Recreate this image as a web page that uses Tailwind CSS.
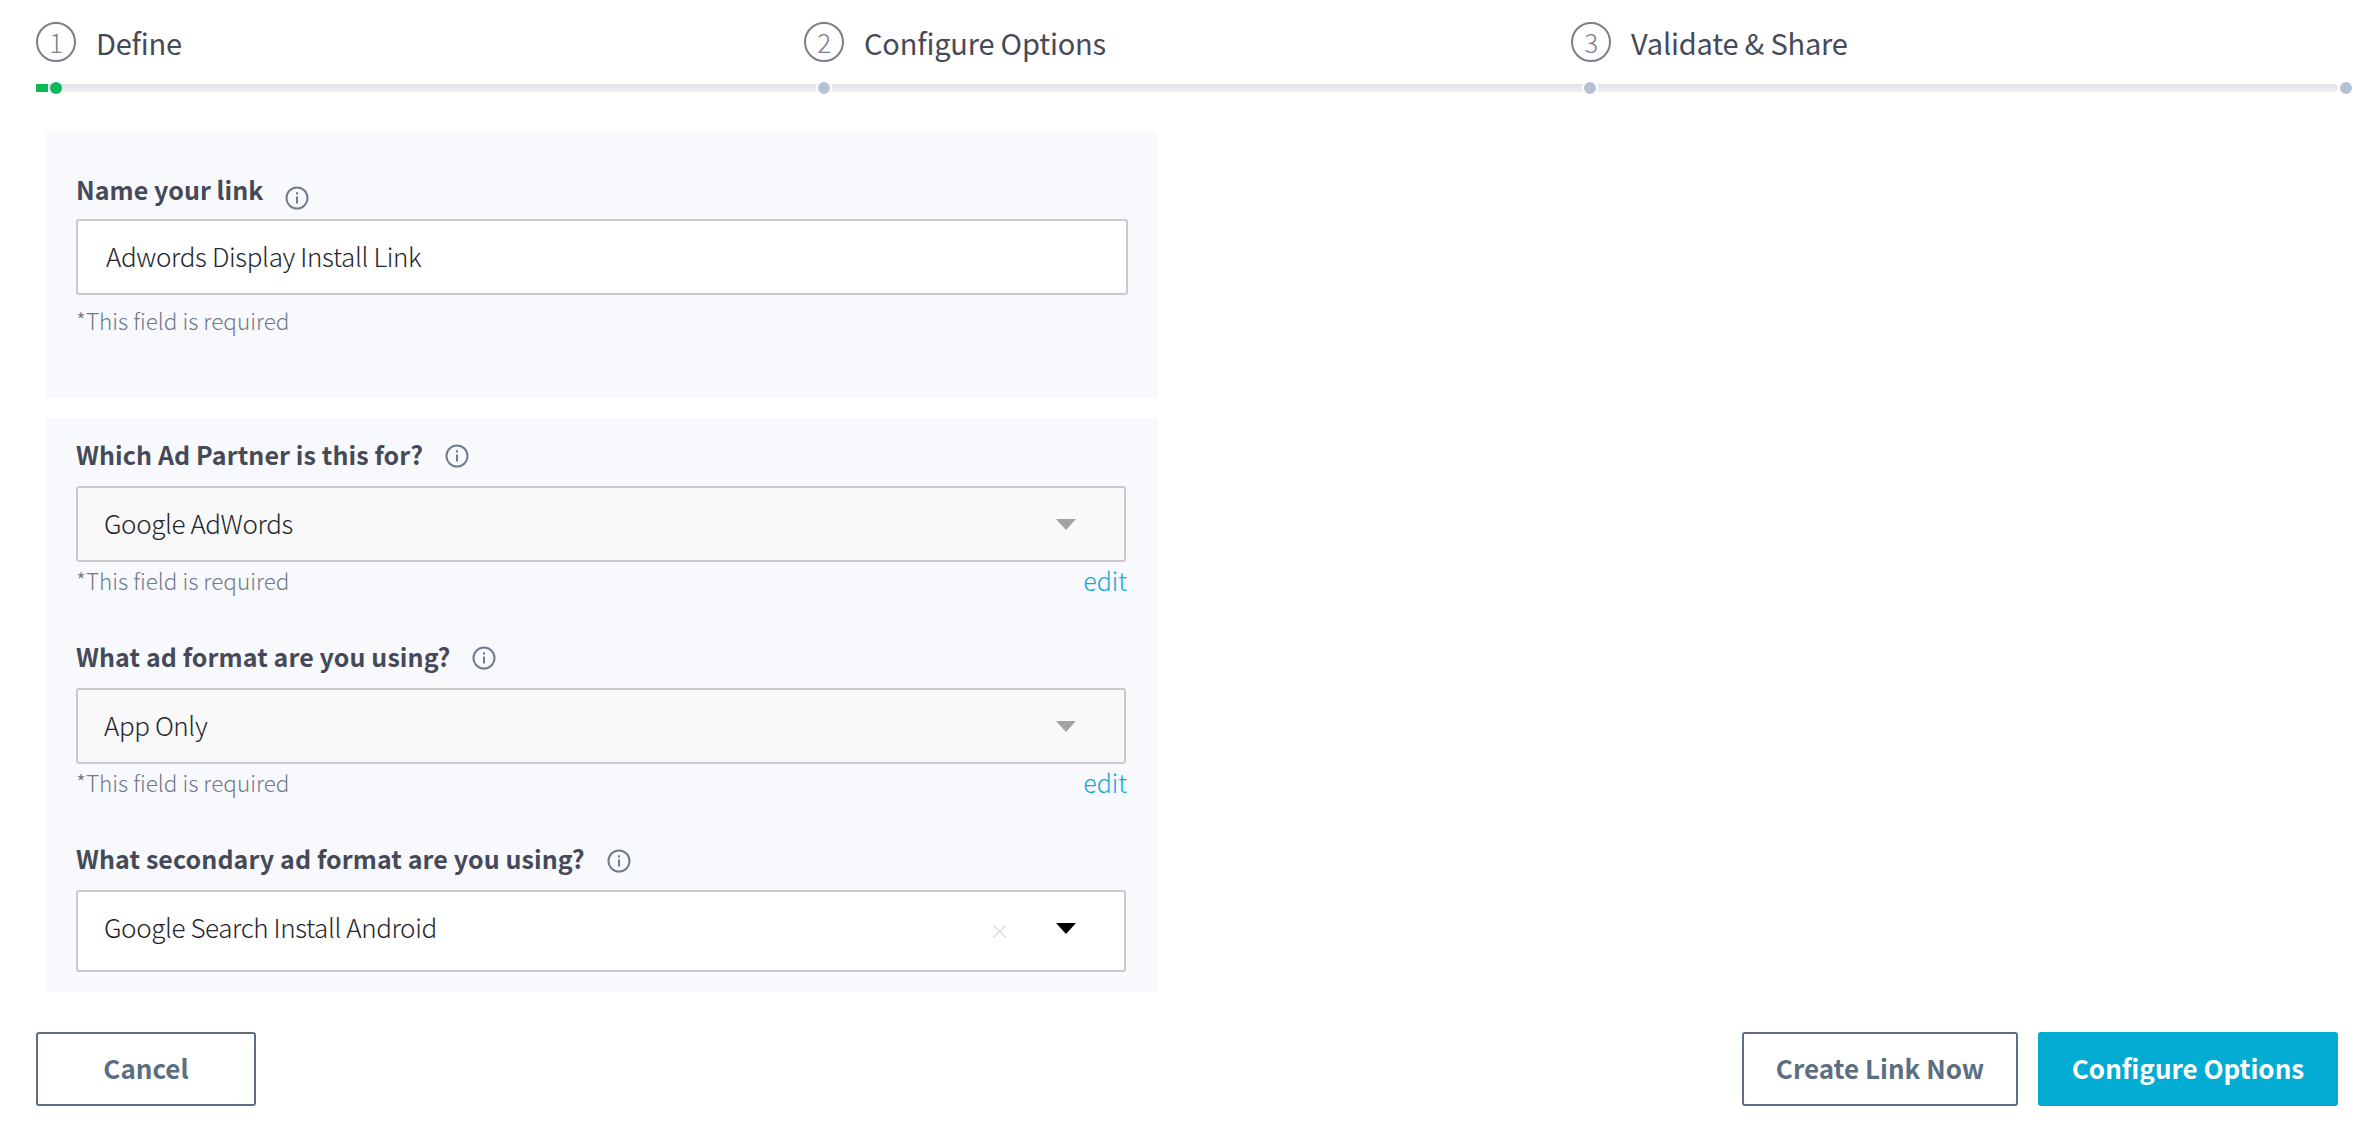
<!DOCTYPE html>
<html>
<head>
<meta charset="utf-8">
<script src="https://cdn.jsdelivr.net/npm/@tailwindcss/browser@4"></script>
</head>
<body class="bg-white font-['Noto_Sans_CJK_SC','Source_Sans_Pro',sans-serif] text-[#464a58] overflow-hidden">
<div class="w-[2366px] h-[1142px] flex flex-col pl-[36px] pr-[28px] pt-[22px]">
  <div class="flex h-[40px] text-[29px] tracking-[-0.2px] leading-[40px]">
    <div class="w-[768px] flex items-center gap-[20px]"><span class="w-[40px] h-[40px] rounded-full border-2 border-[#7b7e8c] flex items-center justify-center text-[26px] font-light text-[#7b7e8c]">1</span><span class="pb-[1px]">Define</span></div>
    <div class="w-[767px] flex items-center gap-[20px]"><span class="w-[40px] h-[40px] rounded-full border-2 border-[#7b7e8c] flex items-center justify-center text-[26px] font-light text-[#7b7e8c]">2</span><span class="pb-[1px]">Configure Options</span></div>
    <div class="flex items-center gap-[20px]"><span class="w-[40px] h-[40px] rounded-full border-2 border-[#7b7e8c] flex items-center justify-center text-[26px] font-light text-[#7b7e8c]">3</span><span class="pb-[1px]">Validate &amp; Share</span></div>
  </div>
  <div class="relative h-[8px] mt-[22px] w-[2302px] rounded-r-[4px] bg-linear-to-b from-[#e2e4ea] to-[#f0f1f4]">
    <div class="absolute left-0 top-0 w-[12px] h-[8px] bg-[#0fb85a]"></div>
    <div class="absolute left-[14px] top-[-2px] w-[12px] h-[12px] rounded-full bg-[#0fb85a]"></div>
    <div class="absolute left-[782px] top-[-2px] w-[12px] h-[12px] rounded-full bg-[#b4c3d4] border-2 border-white box-content -translate-x-[2px] -translate-y-[2px]"></div>
    <div class="absolute left-[1548px] top-[-2px] w-[12px] h-[12px] rounded-full bg-[#b4c3d4] border-2 border-white box-content -translate-x-[2px] -translate-y-[2px]"></div>
    <div class="absolute left-[2304px] top-[-2px] w-[12px] h-[12px] rounded-full bg-[#b4c3d4] border-2 border-white box-content -translate-x-[2px] -translate-y-[2px]"></div>
  </div>
  <div class="ml-[10px] mt-[40px] w-[1112px] flex flex-col">
    <section class="h-[266px] bg-[#f8f9fd] px-[30px] pt-[40px]">
      <div class="flex items-center h-[47px] pb-[14px] text-[25px] tracking-[0.05px] font-bold leading-[36px]"><span>Name your link</span><svg class="ml-[22px] mt-[18px]" width="24" height="24" viewBox="0 0 24 24" fill="none" stroke="#6f7d8e" stroke-width="2"><circle cx="12" cy="12" r="10.5"/><path d="M12 10.5v7"/><path d="M12 6.2v2.4"/></svg></div>
      <div class="h-[76px] w-[1052px] bg-white border-2 border-[#cacaca] rounded-[3px] flex items-center pl-[28px] pb-[4px] text-[26px] font-light tracking-[-0.35px] text-[#23262f]">Adwords Display Install Link</div>
      <div class="mt-[8px] text-[22.5px] leading-[34px] font-light text-[#717a88]">*This field is required</div>
    </section>
    <section class="mt-[20px] h-[574px] bg-[#f8f9fd] px-[30px] pt-[20px]">
      <div class="flex items-center h-[48px] pb-[15px] text-[25px] tracking-[0.1px] font-bold"><span>Which Ad Partner is this for?</span><svg class="ml-[22px] mt-[3px]" width="24" height="24" viewBox="0 0 24 24" fill="none" stroke="#6f7d8e" stroke-width="2"><circle cx="12" cy="12" r="10.5"/><path d="M12 10.5v7"/><path d="M12 6.2v2.4"/></svg></div>
      <div class="h-[76px] w-[1050px] bg-[#f9f9f9] border-2 border-[#cacaca] rounded-[3px] flex items-center justify-between pl-[26px] pr-[48px] text-[26px] font-light tracking-[-0.4px] text-[#23262f]"><span class="pb-[4px]">Google AdWords</span><span class="w-0 h-0 border-x-[10px] border-x-transparent border-t-[11px] border-t-[#a3a3a3]"></span></div>
      <div class="flex justify-between w-[1051px] h-[34px] leading-[34px] mt-[1px] text-[22.5px] font-light text-[#717a88]"><span>*This field is required</span><a class="text-[25px] text-[#0fa9d1]">edit</a></div>
      <div class="flex items-center h-[48px] pb-[15px] mt-[43px] text-[25px] tracking-[0.1px] font-bold"><span>What ad format are you using?</span><svg class="ml-[22px] mt-[3px]" width="24" height="24" viewBox="0 0 24 24" fill="none" stroke="#6f7d8e" stroke-width="2"><circle cx="12" cy="12" r="10.5"/><path d="M12 10.5v7"/><path d="M12 6.2v2.4"/></svg></div>
      <div class="h-[76px] w-[1050px] bg-[#f9f9f9] border-2 border-[#cacaca] rounded-[3px] flex items-center justify-between pl-[26px] pr-[48px] text-[26px] font-light tracking-[-0.4px] text-[#23262f]"><span class="pb-[4px]">App Only</span><span class="w-0 h-0 border-x-[10px] border-x-transparent border-t-[11px] border-t-[#a3a3a3]"></span></div>
      <div class="flex justify-between w-[1051px] h-[34px] leading-[34px] mt-[1px] text-[22.5px] font-light text-[#717a88]"><span>*This field is required</span><a class="text-[25px] text-[#0fa9d1]">edit</a></div>
      <div class="flex items-center h-[48px] pb-[14px] mt-[43px] text-[25px] tracking-[0.1px] font-bold"><span>What secondary ad format are you using?</span><svg class="ml-[22px] mt-[3px]" width="24" height="24" viewBox="0 0 24 24" fill="none" stroke="#6f7d8e" stroke-width="2"><circle cx="12" cy="12" r="10.5"/><path d="M12 10.5v7"/><path d="M12 6.2v2.4"/></svg></div>
      <div class="h-[82px] w-[1050px] bg-white border-2 border-[#cacaca] rounded-[3px] flex items-center pl-[26px] pr-[48px] pb-[6px] text-[26px] font-light tracking-[-0.4px] text-[#23262f]"><span class="pb-[3px]">Google Search Install Android</span><span class="ml-auto mr-[47px] mt-[6px] text-[20px] text-[#cfd2d6] font-light">×</span><span class="w-0 h-0 border-x-[10px] border-x-transparent border-t-[11px] border-t-black"></span></div>
    </section>
  </div>
  <div class="mt-[40px] flex text-[26px] font-bold">
    <button class="w-[220px] h-[74px] pb-[4px] border-2 border-[#5c6f82] rounded-[3px] text-[#5c6f82]">Cancel</button>
    <button class="ml-auto w-[276px] h-[74px] pb-[4px] border-2 border-[#5c6f82] rounded-[3px] text-[#5c6f82]">Create Link Now</button>
    <button class="ml-[20px] w-[300px] h-[74px] pb-[4px] rounded-[3px] bg-[#02acd2] text-white">Configure Options</button>
  </div>
</div>
</body>
</html>
